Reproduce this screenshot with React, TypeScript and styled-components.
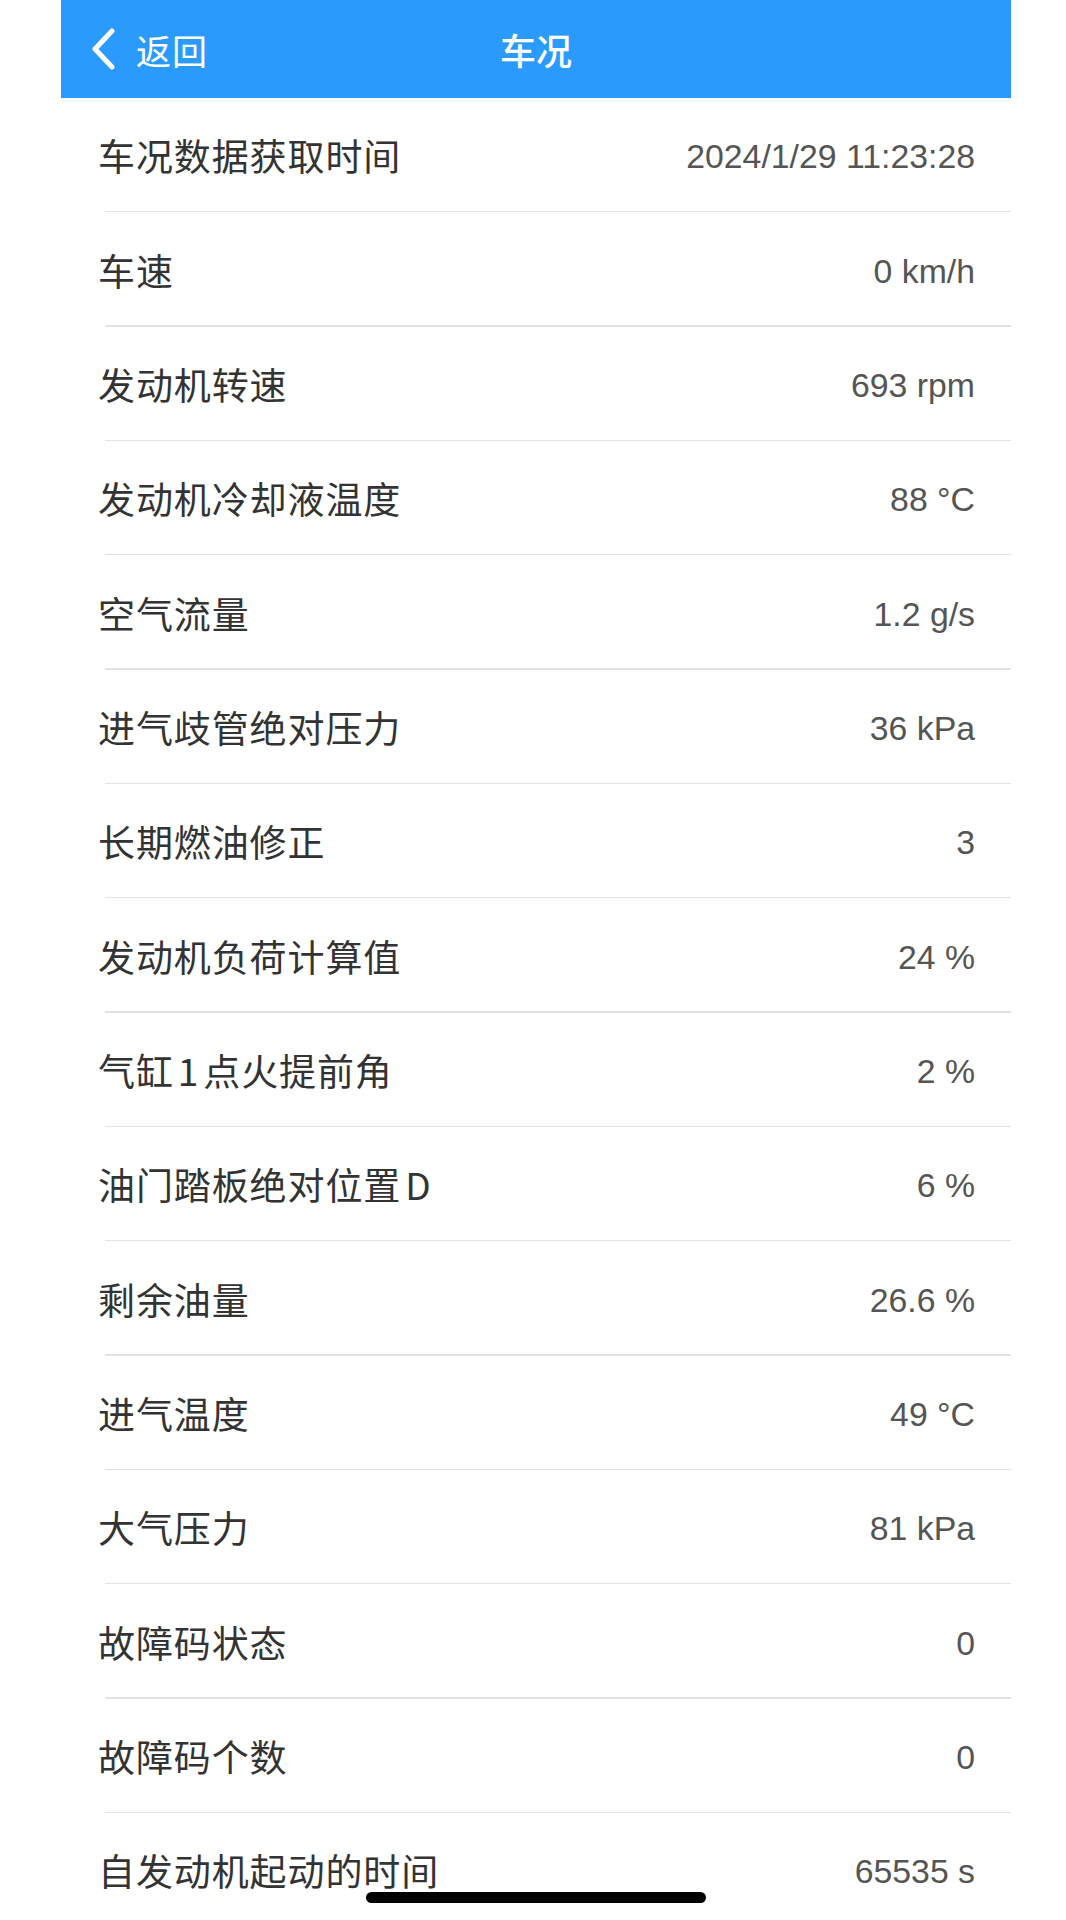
import React from "react";
import styled, { createGlobalStyle } from "styled-components";

const GlobalStyle = createGlobalStyle`
  html, body {
    margin: 0;
    padding: 0;
    background: #ffffff;
  }
  body {
    font-family: "Liberation Sans", "Noto Sans CJK SC", sans-serif;
    -webkit-font-smoothing: antialiased;
  }
`;

const Page = styled.div`
  width: 950px;
  margin-left: 61px;
  min-height: 1920px;
  background: #ffffff;
`;

const NavBar = styled.div`
  position: relative;
  height: 98px;
  background: #2a9bfc;
  display: flex;
  align-items: center;
  justify-content: center;
`;

const BackButton = styled.button`
  position: absolute;
  left: 29px;
  top: 0;
  bottom: 0;
  display: flex;
  align-items: center;
  gap: 20px;
  padding: 0;
  border: none;
  background: transparent;
  color: #ffffff;
  font-family: "Noto Sans CJK SC", sans-serif;
  font-size: 35px;
  letter-spacing: 1px;
  cursor: pointer;
`;

const Title = styled.h1`
  margin: 0;
  color: #ffffff;
  font-family: "Noto Sans CJK SC", sans-serif;
  font-size: 36px;
  font-weight: 500;
`;

const List = styled.div`
  display: flex;
  flex-direction: column;
`;

const Row = styled.div`
  position: relative;
  height: 114.35px;
  box-sizing: border-box;
  display: flex;
  align-items: center;
  justify-content: space-between;
  padding: 0 36px 0 37px;

  &::after {
    content: "";
    position: absolute;
    left: 44px;
    right: 0;
    bottom: 0;
    height: 1.5px;
    background: #e2e2e2;
  }

  &:last-child::after {
    display: none;
  }
`;

const Label = styled.span`
  color: #333333;
  font-family: "Noto Sans CJK SC", sans-serif;
  font-size: 37px;
  letter-spacing: 0.9px;
`;

const Latin = styled.span`
  margin: 0 4px;
`;

const Value = styled.span`
  padding-top: 3px;
  color: #555555;
  font-family: "Liberation Sans", "Noto Sans CJK SC", sans-serif;
  font-size: 33.8px;
`;

const HomeIndicator = styled.div`
  position: fixed;
  left: 366px;
  top: 1892px;
  width: 340px;
  height: 11px;
  border-radius: 6px;
  background: #000000;
`;

const items: [string, string][] = [
  ["车况数据获取时间", "2024/1/29 11:23:28"],
  ["车速", "0 km/h"],
  ["发动机转速", "693 rpm"],
  ["发动机冷却液温度", "88 °C"],
  ["空气流量", "1.2 g/s"],
  ["进气歧管绝对压力", "36 kPa"],
  ["长期燃油修正", "3"],
  ["发动机负荷计算值", "24 %"],
  ["气缸1点火提前角", "2 %"],
  ["油门踏板绝对位置D", "6 %"],
  ["剩余油量", "26.6 %"],
  ["进气温度", "49 °C"],
  ["大气压力", "81 kPa"],
  ["故障码状态", "0"],
  ["故障码个数", "0"],
  ["自发动机起动的时间", "65535 s"],
];

// latin runs inside chinese labels get a little air around them
function renderLabel(text: string) {
  return text
    .split(/([A-Za-z0-9]+)/)
    .filter(Boolean)
    .map((part, i) =>
      /^[A-Za-z0-9]+$/.test(part) ? <Latin key={i}>{part}</Latin> : part,
    );
}

function ChevronLeft() {
  return (
    <svg width="26" height="42" viewBox="0 0 26 42" fill="none">
      <path
        d="M22 3 L5 21 L22 39"
        stroke="#ffffff"
        strokeWidth="5"
        strokeLinecap="round"
        strokeLinejoin="round"
      />
    </svg>
  );
}

export default function App() {
  return (
    <>
      <GlobalStyle />
      <Page>
        <NavBar>
          <BackButton>
            <ChevronLeft />
            返回
          </BackButton>
          <Title>车况</Title>
        </NavBar>
        <List>
          {items.map(([label, value]) => (
            <Row key={label}>
              <Label>{renderLabel(label)}</Label>
              <Value>{value}</Value>
            </Row>
          ))}
        </List>
      </Page>
      <HomeIndicator />
    </>
  );
}
